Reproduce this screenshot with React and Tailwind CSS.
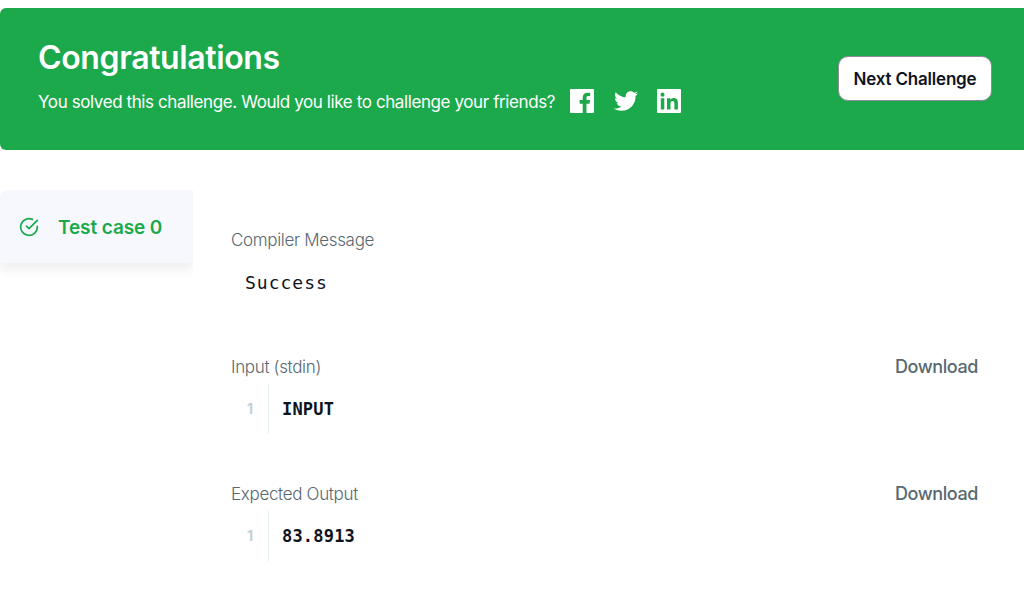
import React from 'react';
import { FaTwitter } from 'react-icons/fa';
import { FiCheckCircle } from 'react-icons/fi';

const sans = { fontFamily: 'Inter, sans-serif' };

const FacebookIcon = () => (
  <svg width="24" height="24" viewBox="0 0 24 24" fill="currentColor">
    <path fillRule="evenodd" d="M1 0h22a1 1 0 0 1 1 1v22a1 1 0 0 1-1 1h-6.500v-9.300h3.100l.5-3.600h-3.600V8.800c0-1 .3-1.800 1.800-1.800h1.900V3.800c-.3 0-1.500-.1-2.800-.1-2.800 0-4.700 1.700-4.700 4.800v2.600H9.600v3.600h3.100V24H1a1 1 0 0 1-1-1V1a1 1 0 0 1 1-1z" />
  </svg>
);

const LinkedinIcon = () => (
  <svg width="24" height="24" viewBox="0 0 24 24" fill="currentColor" className="-ml-[1px]">
    <path fillRule="evenodd" d="M1 0h22a1 1 0 0 1 1 1v22a1 1 0 0 1-1 1H1a1 1 0 0 1-1-1V1a1 1 0 0 1 1-1zm2.800 9.200v11.300h3.500V9.200H3.800zM5.500 3.600a2 2 0 1 0 0 4.100 2 2 0 0 0 0-4.100zm7.900 5.600H10v11.300h3.500v-5.600c0-1.500.3-2.900 2.100-2.900s1.800 1.700 1.800 3v5.500h3.500v-6.200c0-3-.7-5.400-4.200-5.400-1.700 0-2.800.9-3.300 1.800h-.05V9.200z" />
  </svg>
);

const CodeBlock = ({ label, value }) => (
  <section className="mb-[50px]">
    <div className="flex items-center justify-between h-[20px]">
      <span className="mt-[2px] -ml-[1px] text-[17px] font-light text-[#576871] tracking-[-0.33px]">{label}</span>
      <button className="mb-[2px] text-[18px] font-medium text-[#576871] tracking-[-0.4px]">Download</button>
    </div>
    <div className="flex h-[50px] mt-[7px]">
      <div className="w-[37px] border-r border-[#e7eef1] pr-[15px] pt-[15px] text-right text-[14px] leading-[20px] font-bold text-[#c2d0d4]">1</div>
      <pre className="pl-[13px] pt-[15px] font-['DejaVu_Sans_Mono',monospace] text-[17px] leading-[20px] tracking-[0.2px] font-bold text-[#0e141e]">{value}</pre>
    </div>
  </section>
);

export default function App() {
  return (
    <div className="w-[1024px] h-[601px] bg-white overflow-hidden pt-[8px]" style={sans}>
      <header className="h-[142px] bg-[#1ba94c] rounded-l-[6px] flex justify-between pl-[38px] pr-[32px]">
        <div className="pt-[31px]">
          <h1 className="text-[32px] leading-[38px] font-semibold text-white tracking-[-0.38px]">Congratulations</h1>
          <div className="flex items-center mt-[10px]">
            <p className="mt-[3px] text-[17px] font-normal text-white tracking-[-0.4px]">You solved this challenge. Would you like to challenge your friends?</p>
            <div className="flex items-center gap-[20px] ml-[15px] text-white">
              <FacebookIcon />
              <FaTwitter size={24} />
              <LinkedinIcon />
            </div>
          </div>
        </div>
        <button className="mt-[48px] w-[154px] h-[45px] pt-[2px] bg-white rounded-[10px] border border-[#8d8b9e] text-[17px] font-semibold text-[#0e141e] tracking-[-0.2px]">
          Next Challenge
        </button>
      </header>

      <div className="flex mt-[40px]">
        <aside className="w-[193px] shrink-0">
          <div className="h-[73px] bg-[#f6f8fd] rounded-tl-[8px] shadow-[0_8px_10px_0_rgba(0,0,0,0.06)] [clip-path:inset(0_0_-24px_0)] flex items-center pl-[19px]">
            <FiCheckCircle size={20} className="text-[#1ba94c]" />
            <span className="mt-[3px] ml-[19px] text-[19px] font-semibold text-[#1ba94c] tracking-[-0.1px]">Test case 0</span>
          </div>
        </aside>
        <main className="flex-1 pl-[39px] pr-[46px] pt-[40px]">
          <div className="h-[20px] flex items-center">
            <span className="mt-[2px] -ml-[1px] text-[17px] font-light text-[#576871] tracking-[-0.33px]">Compiler Message</span>
          </div>
          <pre className="h-[107px] pl-[13px] pt-[22px] font-['DejaVu_Sans_Mono',monospace] text-[18px] leading-[22px] tracking-[1px] text-[#0e141e]">Success</pre>
          <CodeBlock label="Input (stdin)" value="INPUT" />
          <CodeBlock label="Expected Output" value="83.8913" />
        </main>
      </div>
    </div>
  );
}
